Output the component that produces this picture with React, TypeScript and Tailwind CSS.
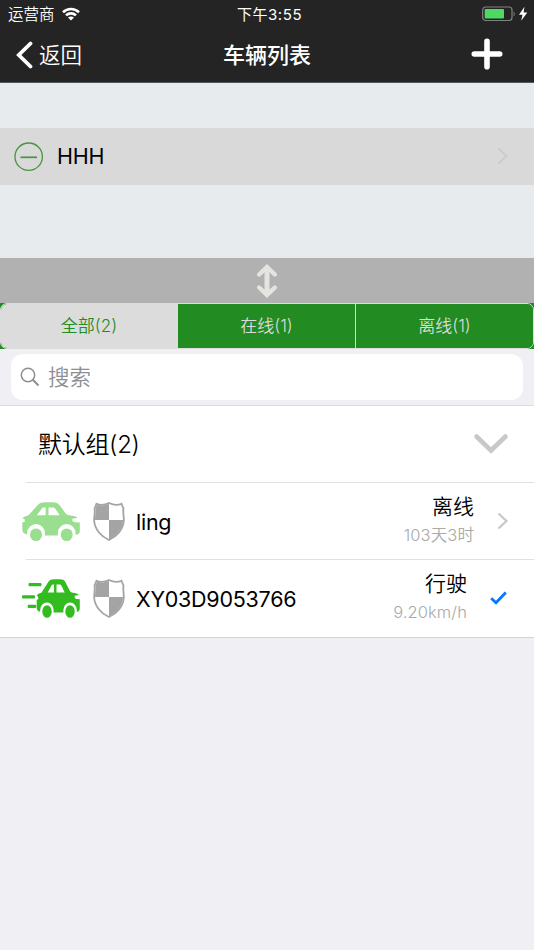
import React from 'react';

type Vehicle = {
  id: string;
  name: string;
  status: string;
  detail: string;
  moving: boolean;
  selected: boolean;
};

const vehicles: Vehicle[] = [
  { id: '1', name: 'ling', status: '离线', detail: '103天3时', moving: false, selected: false },
  { id: '2', name: 'XY03D9053766', status: '行驶', detail: '9.20km/h', moving: true, selected: true },
];

const tabs = [
  { key: 'all', label: '全部(2)' },
  { key: 'online', label: '在线(1)' },
  { key: 'offline', label: '离线(1)' },
];

const WifiIcon = () => (
  <svg className="w-[18px] h-[14px]" viewBox="0 0 18 14" fill="none" stroke="#fff" strokeWidth="2.6">
    <path d="M1 5.2C5.5.9 12.5.9 17 5.2" />
    <path d="M4 8.4c2.8-2.7 7.2-2.7 10 0" />
    <path d="M9 13.4 6 10.6c1.7-1.6 4.3-1.6 6 0z" fill="#fff" stroke="none" />
  </svg>
);

const BatteryIcon = () => (
  <svg className="w-[46px] h-[16px]" viewBox="0 0 46 16">
    <rect x="0.7" y="1" width="29.3" height="13.5" rx="3" fill="none" stroke="#828282" strokeWidth="1.2" />
    <rect x="2.7" y="3" width="19.3" height="9.5" rx="1" fill="#4cd964" />
    <path d="M31.6 5.5c1.5.6 1.5 4.2 0 4.8z" fill="#828282" />
    <path d="M42.5.8 37 8.8h3.5L39.200 14.800 45.300 6.600h-3.700z" fill="#fff" />
  </svg>
);

const CarIcon = () => (
  <svg className="w-[58px] h-[39px]" viewBox="0 0 58 39" fill="#9ade8f">
    <path
      fillRule="evenodd"
      d="M20.5.5C25 0 29 0 33 .6c2.5.5 3.8 1.5 5.3 3.5L44 12c1 .9 2.5 1.2 4.5 1.5 3 .4 6 1 7.200 2.400l-4.700.7c-1.500.7-.5 3 1.500 3.600l5.300.2v8.300c0 2.700-1.400 3.800-4.200 4V31a8.900 8.900 0 0 0-17.800 0v2.600H22.900V31a8.900 8.900 0 0 0-17.800 0v1.500C1.800 31.800.3 30.500.3 27.500V20.600l2.500-.8L2.500 17l-2-.4C1.500 14.500 4 14 6.500 13.200L15.800 3C17.300 1.300 18.500.7 20.500.5zM20 6.500 14.700 13.300h9V5.500h-1.500c-1 0-1.600.3-2.200 1zM26.500 5.500v7.800h11.200l-3.900-5.800c-1.200-1.700-1.800-2-3.400-2z"
    />
    <ellipse cx="14" cy="32.7" rx="6" ry="6.3" />
    <ellipse cx="44.7" cy="32.7" rx="6" ry="6.3" />
  </svg>
);

const MovingCarIcon = () => (
  <svg className="w-[58px] h-[39px]" viewBox="0 0 58 39" fill="#32bc20">
    <rect x="6.5" y="4" width="13" height="3.2" rx="1" />
    <rect y="16.3" width="13" height="3.2" rx="1" />
    <rect x="5.7" y="25.700" width="8.500" height="3.200" rx="1" />
    <path
      fillRule="evenodd"
      d="M30 .6C33 .1 37 .1 40 .6c1.800.3 2.700 1.300 3.600 3L48 12.300c.6.9 1.500 1.200 3 1.500 2.500.4 5 1 6 2.200l-4 .8c-1 1-.2 2.600 1.300 3.300l3.500.2V29c0 2.200-1 3.500-3 4V31a6.700 7.600 0 0 0-13.400 0v2.500h-9.800V31a6.700 7.600 0 0 0-13.400 0v1.700c-2.500-.5-3.500-1.700-3.500-4.200v-7.500l1.700-.9-.4-2.600-1.300-.5c.8-2.200 2.300-2.500 4.700-3.300L26.300 3C27.200 1.500 28.300.9 30 .6zM29.400 6.700 25.700 13.500H32V5.500h-.8c-.8 0-1.300.4-1.800 1.200zM34.500 5.500v8h8.200l-3-6.200c-.6-1.400-1.200-1.800-2.400-1.800z"
    />
    <ellipse cx="25" cy="32.500" rx="4.700" ry="6.300" />
    <ellipse cx="48" cy="32.500" rx="4.700" ry="6.300" />
  </svg>
);

const ShieldIcon = () => (
  <svg className="w-[32px] h-[39px]" viewBox="0 0 32 39">
    <path
      d="M3.500 1.700c3.200 1.500 8 1.400 12.500-.7 4.500 2.100 9.300 2.200 12.500.7.700 2 1.400 3.400 2 4.600-.9 3.500.5 7.300.3 12.700C30.300 27 24 34.500 16 38 8 34.500 1.700 27 1.200 19 1 13.600 2.400 9.800 1.500 6.300c.6-1.200 1.300-2.600 2-4.600z"
      fill="#fff"
      stroke="#a4a4a4"
      strokeWidth="1.800"
    />
    <path d="M4 2.700c3.800 1.200 7.800 1 12-1V18H2c0-4.500 1-8 .5-11.500z" fill="#a4a4a4" />
    <path d="M16 18h14c.1 8-6 15.500-14 19.500z" fill="#a4a4a4" />
  </svg>
);

const Arrow = () => (
  <svg className="w-[12px] h-[18px]" viewBox="0 0 12 18" fill="none" stroke="#c7c7cc" strokeWidth="2.2">
    <path d="M1.500 1.500 9.500 9l-8 7.500" />
  </svg>
);

const Header = () => (
  <header className="h-[83px] bg-[#242424] border-b border-[#55585a] text-white">
    <div className="h-[27px] grid grid-cols-3 items-center text-[15px]">
      <div className="flex items-center gap-[7px] pl-[8px]">
        <span className="text-[15.5px] leading-none pt-[2px] font-[350]">运营商</span>
        <WifiIcon />
      </div>
      <span className="text-center leading-none tracking-[0.55px] pt-px pl-[5px]">下午3:55</span>
      <div className="flex justify-end pr-[6px]">
        <BatteryIcon />
      </div>
    </div>
    <div className="h-[55px] grid grid-cols-3 items-center">
      <div className="flex items-center gap-[6px] pl-[16px]">
        <svg className="w-[17px] h-[28px]" viewBox="0 0 17 28" fill="none" stroke="#fff" strokeWidth="3.8" strokeLinecap="round">
          <path d="M14.500 2.500 2.800 14l11.700 11.500" />
        </svg>
        <span className="text-[21.5px] leading-none pt-[2px] font-[350]">返回</span>
      </div>
      <h1 className="text-center text-[22px] leading-none font-medium">车辆列表</h1>
      <div className="flex justify-end pr-[31px]">
        <svg className="w-[32px] h-[32px] -mt-[2px]" viewBox="0 0 32 32" stroke="#fff" strokeWidth="5.6" strokeLinecap="round">
          <path d="M16 3.300v25.400M3.300 16h25.400" />
        </svg>
      </div>
    </div>
  </header>
);

const VehicleRow = ({ vehicle }: { vehicle: Vehicle }) => (
  <div className="h-[76px] flex items-center pl-[22px]">
    {vehicle.moving ? <MovingCarIcon /> : <CarIcon />}
    <div className="ml-[13px]">
      <ShieldIcon />
    </div>
    <span className="ml-[11px] text-[21.5px] leading-none tracking-[-0.25px] pt-[4px]">{vehicle.name}</span>
    <div className="ml-auto flex flex-col items-end gap-[10px] pb-[3px]">
      <span className="text-[21px] leading-none font-[350]">{vehicle.status}</span>
      <span className="text-[16.5px] leading-none font-[350] tracking-[0.1px] text-[#aaaaaa]">{vehicle.detail}</span>
    </div>
    {vehicle.selected ? (
      <svg className="w-[17px] h-[14px] ml-[23px] mr-[27px]" viewBox="0 0 17 14" fill="none" stroke="#007aff" strokeWidth="2.8">
        <path d="M1.200 7.200 6 11.700 15.800 1.500" />
      </svg>
    ) : (
      <div className="ml-[23px] mr-[25px]">
        <Arrow />
      </div>
    )}
  </div>
);

export default function App() {
  const activeTab = 'all';

  return (
    <div className="w-full h-[950px] overflow-hidden bg-[#efeff4] text-black font-['Inter','Noto_Sans_CJK_SC',sans-serif]">
      <Header />

      {/* Accounts */}
      <section className="h-[175px] bg-[#e7ebee] pt-[45px]">
        <div className="h-[57px] bg-[#d9d9d9] flex items-center pl-[14px]">
          <svg className="w-[30px] h-[30px]" viewBox="0 0 30 30" fill="none" stroke="#46963c" strokeWidth="1.3">
            <circle cx="14.7" cy="14.7" r="13.7" />
            <path d="M6.500 15.300h16.500" strokeWidth="1.7" />
          </svg>
          <span className="ml-[13px] text-[21.5px] leading-none tracking-[-0.25px] pt-px">HHH</span>
          <div className="ml-auto mr-[25px] pb-[2px] opacity-70">
            <Arrow />
          </div>
        </div>
      </section>

      {/* Drag handle */}
      <div className="h-[45px] bg-[#b1b1b1] flex items-center justify-center">
        <svg className="w-[22px] h-[34px]" viewBox="0 0 22 34" fill="none" stroke="#e4e4e0" strokeWidth="4.4" strokeLinecap="round">
          <path d="M11 3.500v27" strokeLinecap="butt" strokeWidth="5" />
          <path d="M3.200 10.500 11 3l7.800 7.500M3.200 23.500 11 31l7.800-7.500" />
        </svg>
      </div>

      <div className="h-[46px] bg-[#228b22]">
        <div className="h-full grid grid-cols-[177px_178px_1fr] rounded-[7px] border border-[#dcdcdc] overflow-hidden">
          {tabs.map((tab) => (
            <div
              key={tab.key}
              className={`flex items-center justify-center text-[17px] leading-none font-[350] border-r border-[#dcdcdc] last:border-r-0 ${
                tab.key === activeTab ? 'bg-[#dcdcdc] text-[#228b22]' : 'bg-[#228b22] text-[#dcdcdc]'
              }`}
            >
              {tab.label}
            </div>
          ))}
        </div>
      </div>

      {/* Search */}
      <div className="h-[57px] px-[11px] pt-[5px] border-b border-[#dcdce0]">
        <div className="h-[46px] bg-white rounded-[12px] flex items-center pl-[9px] text-[#8e8e93]">
          <svg className="w-[20px] h-[20px]" viewBox="0 0 20 20" fill="none" stroke="currentColor" strokeWidth="1.5">
            <circle cx="8" cy="8" r="6.7" />
            <path d="m12.800 12.800 5.700 5.700" strokeWidth="2" />
          </svg>
          <span className="ml-[8px] text-[21.5px] leading-none font-[350] pt-px">搜索</span>
        </div>
      </div>

      {/* Vehicle group */}
      <section className="h-[232px] bg-white border-b border-[#d3d3d7]">
        <div className="h-[76px] flex items-center justify-between pl-[38px] pr-[25px]">
          <h2 className="text-[24px] leading-none font-[350] tracking-[-0.3px] pt-px">默认组(2)</h2>
          <svg className="w-[36px] h-[22px]" viewBox="0 0 36 22" fill="none" stroke="#c8c8c8" strokeWidth="4.6" strokeLinecap="round">
            <path d="M3.500 3.500 18 17.500l14.500-14" />
          </svg>
        </div>
        {vehicles.map((vehicle) => (
          <div key={vehicle.id}>
            <div className="h-px ml-[26px] bg-[#e0e0e2]" />
            <VehicleRow vehicle={vehicle} />
          </div>
        ))}
      </section>
    </div>
  );
}
